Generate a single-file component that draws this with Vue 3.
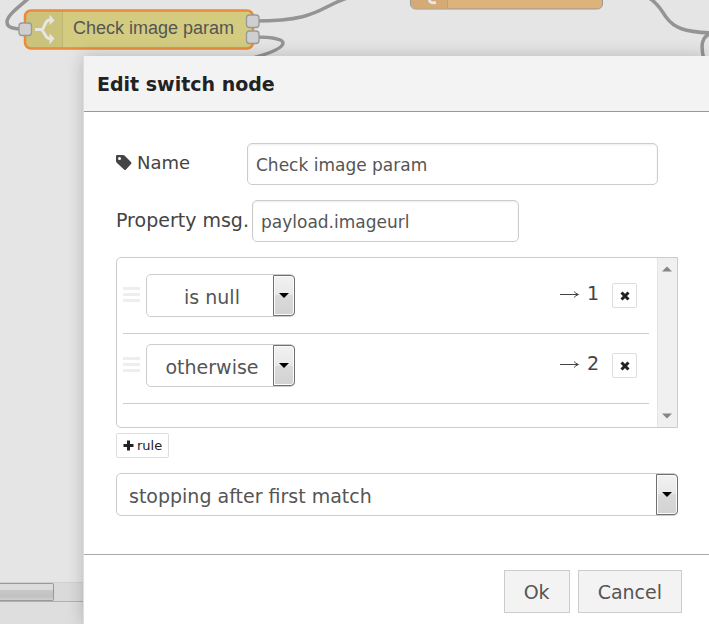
<script setup>
import { ref } from 'vue'

const name = ref('Check image param')
const property = ref('payload.imageurl')
const mode = ref('stopping after first match')
const rules = ref([
  { id: 1, op: 'is null' },
  { id: 2, op: 'otherwise' },
])
const nextId = ref(3)

function addRule() {
  rules.value.push({ id: nextId.value++, op: 'otherwise' })
}
function removeRule(id) {
  rules.value = rules.value.filter((r) => r.id !== id)
}
</script>

<template>
  <div class="page">
    <div class="workspace" aria-hidden="true">
      <svg class="canvas" width="1200" height="120" viewBox="0 0 1200 120">
        <g fill="none" stroke="#949494" stroke-width="3.500">
          <path d="M29 -2C16 9 7 16 7 22C7 28 14 29 25 29" />
          <path d="M254 21C320 21 318 7 350 -3" />
          <path d="M254 37C272 37 283 39 283 43C283 49 265 55 245 60" />
          <path d="M649 -2C658 3 661 10 666 17C674 28 684 32 712 33" />
          <path d="M712 33C702 36 700 44 704 60" />
        </g>
        <rect x="25" y="10.500" width="228" height="38" rx="6" fill="#d3cb80" />
        <path d="M31 10.500H63V48.500H31Q25 48.500 25 42.500V16.500Q25 10.500 31 10.500Z" fill="#cbc37b" />
        <path d="M62.500 11V48" stroke="#bdb673" />
        <rect x="25" y="10.500" width="228" height="38" rx="6" fill="none" stroke="#e98b39" stroke-width="2.500" />
        <g fill="none" stroke="#e6e6e6" stroke-width="3">
          <path d="M35 29.500H42C45.500 27 44.500 20.500 49 20H51" />
          <path d="M41 29.500C45.500 32 44.500 38 49 38.500H51" />
        </g>
        <path d="M49.500 14.500L54.500 20.500L49.500 25ZM49.500 33.500L54.500 38.500L49.500 44.500Z" fill="#e6e6e6" />
        <g fill="#cfcfcf" stroke="#999" stroke-width="1.300">
          <rect x="19" y="23" width="12.500" height="12.500" rx="3" />
          <rect x="246.500" y="15" width="12.500" height="12.500" rx="3" />
          <rect x="246.500" y="31" width="12.500" height="12.500" rx="3" />
        </g>
        <text class="node-label" x="73" y="34">Check image param</text>
        <rect x="410.500" y="-20" width="192" height="29" rx="5" fill="#ddb27b" stroke="#999" />
        <path d="M447 8.500H415Q411 8.500 411 4V0H447Z" fill="#d4aa76" />
        <path d="M447.500 0V8.500" stroke="#c6a06d" />
        <path d="M429.500 -1C429 3 432 3 436 2.500" fill="none" stroke="#e6e6e6" stroke-width="3" />
      </svg>
      <div class="hscroll"><div class="thumb"></div></div>
      <div class="under"></div>
    </div>

    <form class="dialog" role="dialog" aria-labelledby="dialog-title" @submit.prevent>
      <h1 id="dialog-title" class="title">Edit switch node</h1>

      <div class="body">
        <div class="row">
          <label class="label" for="node-name">
            <svg class="tag" width="16" height="16" viewBox="0 0 16 16">
              <path fill="#444" fill-rule="evenodd" d="M1 0H7Q8 0 9 1L15 7Q16 8 15 9L10 14.500Q9 15.500 8 14.500L1 8Q0 7 0 6V1Q0 0 1 0ZM3.500 2A1.500 1.500 0 1 0 3.500 5A1.500 1.500 0 1 0 3.500 2Z" />
            </svg>
            <span>Name</span>
          </label>
          <input id="node-name" v-model="name" class="field wide" type="text" />
        </div>

        <div class="row">
          <label class="label property" for="node-property">Property msg.</label>
          <input id="node-property" v-model="property" class="field short" type="text" />
        </div>

        <div class="rules">
          <ol class="rule-list">
            <li v-for="(rule, i) in rules" :key="rule.id" class="rule">
              <span class="handle"><i></i><i></i><i></i></span>
              <div class="picker small">
                <select v-model="rule.op" :aria-label="'Rule ' + (i + 1)">
                  <option>is null</option>
                  <option>otherwise</option>
                </select>
                <span class="drop"></span>
              </div>
              <span class="output">
                <svg width="20" height="14" viewBox="0 0 20 14">
                  <path d="M0 8.500H18M14 5.500Q15.500 7.500 18.500 8.500Q15.500 9.500 14 11.500" fill="none" stroke="#444" />
                </svg>
                <span>{{ i + 1 }}</span>
              </span>
              <button class="mini remove" type="button" aria-label="Remove rule" @click="removeRule(rule.id)">
                <svg width="10" height="10" viewBox="0 0 10 10">
                  <path d="M1.500 1.500L8.500 8.500M8.500 1.500L1.500 8.500" stroke="#222" stroke-width="3" />
                </svg>
              </button>
            </li>
          </ol>
          <div class="vscroll">
            <svg width="10" height="6" viewBox="0 0 10 6"><path d="M0 5.500L5 0.500L10 5.500Z" fill="#858585" /></svg>
            <svg width="10" height="6" viewBox="0 0 10 6"><path d="M0 0.500L5 5.500L10 0.500Z" fill="#858585" /></svg>
          </div>
        </div>

        <button class="mini add" type="button" @click="addRule">
          <svg width="11" height="11" viewBox="0 0 11 11">
            <path d="M5.500 0.500V10.500M0.500 5.500H10.500" stroke="#222" stroke-width="3" />
          </svg>
          <span>rule</span>
        </button>

        <div class="picker">
          <select v-model="mode" aria-label="Matching mode">
            <option>stopping after first match</option>
            <option>checking all rules</option>
          </select>
          <span class="drop"></span>
        </div>
      </div>

      <div class="footer">
        <button class="action" type="submit">Ok</button>
        <button class="action" type="button">Cancel</button>
      </div>
    </form>
  </div>
</template>

<style>
body {
  margin: 0;
}
</style>

<style scoped>
* {
  box-sizing: border-box;
}
.page {
  position: relative;
  display: flex;
  min-height: 100vh;
  padding: 56px 0 0 83px;
  overflow: hidden;
  font-family: "DejaVu Sans", Verdana, sans-serif;
  font-size: 19px;
  color: #444;
}
.workspace {
  position: absolute;
  inset: 0;
  display: flex;
  flex-direction: column;
  overflow: hidden;
  background: #e5e5e5;
}
.canvas {
  display: block;
  flex: none;
  margin-bottom: auto;
}
.node-label {
  font-family: "Liberation Sans", Arial, sans-serif;
  font-size: 18px;
  fill: #555;
}
.hscroll {
  height: 20px;
  border-top: 1px solid #d0d0d0;
  border-bottom: 1px solid #b0b0b0;
  background: #dadada;
}
.thumb {
  width: 54px;
  height: 18px;
  border: 1px solid #999;
  border-left: 0;
  border-radius: 0 2px 2px 0;
  background: linear-gradient(#dcdcdc 0 35%, #c8c8ca 36%, #c2c2c4 80%, #d0d0d0);
}
.under {
  height: 22px;
  background: #dedede;
}
.dialog {
  position: relative;
  display: flex;
  flex: 1;
  flex-direction: column;
  min-width: 0;
  border-left: 1px solid #ddd;
  background: #fff;
  box-shadow: 0 0 16px rgba(0, 0, 0, 0.2);
}
.title {
  margin: 0;
  padding: 1px 13px 0;
  border-bottom: 1px solid #999;
  background: #f3f3f3;
  color: #222;
  font-size: 19px;
  line-height: 54px;
}
.body {
  display: flex;
  flex-direction: column;
  padding: 31px 31px 38px 32px;
}
.row {
  display: flex;
  margin-bottom: 15px;
}
.label {
  display: flex;
  gap: 5px;
  width: 131px;
  font-size: 18px;
  line-height: 40px;
}
.tag {
  margin-top: 12px;
}
.property {
  width: 136px;
  font-size: 19px;
  white-space: nowrap;
}
.field {
  min-width: 0;
  height: 42px;
  padding: 1px 8px 0;
  border: 1px solid #ccc;
  border-radius: 5px;
  background: #fff;
  box-shadow: inset 0 1px 2px rgba(0, 0, 0, 0.08);
  color: #555;
  font: inherit;
  font-size: 17px;
  outline: none;
}
.wide {
  flex: 1;
  margin-right: 20px;
}
.short {
  width: 267px;
}
.rules {
  display: flex;
  min-height: 171px;
  margin-bottom: 5px;
  border: 1px solid #ccc;
  border-radius: 5px 0 0 5px;
}
.rule-list {
  flex: 1;
  margin: 0;
  padding: 6px 8px 0 6px;
  list-style: none;
}
.rule {
  display: flex;
  align-items: center;
  height: 70px;
  padding: 0 12px 6px 0;
  border-bottom: 1px solid #ccc;
}
.handle {
  display: grid;
  gap: 3px;
  width: 23px;
  padding-bottom: 2px;
}
.handle i {
  width: 17px;
  height: 3px;
  background: #eee;
}
.picker {
  position: relative;
  display: flex;
  height: 43px;
}
.picker select {
  width: 100%;
  padding: 3px 22px 0 12px;
  border: 1px solid #ccc;
  border-radius: 5px;
  appearance: none;
  background: #fff;
  color: #555;
  font: inherit;
  outline: none;
}
.small {
  width: 149px;
}
.small select {
  padding-left: 5px;
  text-align: center;
  text-align-last: center;
}
.drop {
  position: absolute;
  top: 1px;
  right: 0;
  bottom: 1px;
  display: grid;
  place-items: center;
  width: 22px;
  border: 1px solid #707070;
  border-radius: 0 4px 4px 0;
  background: linear-gradient(#f2f2f2, #e8e8e8 50%, #dadada 50%, #d2d2d2);
  box-shadow: inset 0 0 0 1px #fafafa;
  pointer-events: none;
}
.drop::before {
  content: "";
  border: 5px solid transparent;
  border-top-color: #000;
  border-bottom: 0;
}
.output {
  display: flex;
  align-items: center;
  gap: 7px;
  margin-right: 13px;
  margin-left: auto;
  padding-bottom: 5px;
}
.mini {
  display: flex;
  align-items: center;
  justify-content: center;
  height: 25px;
  padding: 0;
  border: 1px solid #ddd;
  border-radius: 2px;
  background: #fff;
  color: #222;
  font: inherit;
  font-size: 13px;
}
.remove {
  width: 25px;
}
.add {
  align-self: flex-start;
  gap: 3px;
  margin-bottom: 15px;
  padding: 0 6px;
}
.vscroll {
  display: flex;
  flex-direction: column;
  align-items: center;
  justify-content: space-between;
  width: 20px;
  padding: 8px 2px 8px 0;
  border-left: 1px solid #e4e4e4;
  background: #f0f0f0;
}
.footer {
  display: flex;
  justify-content: flex-end;
  gap: 8px;
  padding: 15px 27px 11px;
  border-top: 1px solid #aaa;
}
.action {
  height: 43px;
  padding: 0 19px;
  border: 1px solid #ccc;
  background: #f3f3f3;
  color: #555;
  font: inherit;
}
</style>
